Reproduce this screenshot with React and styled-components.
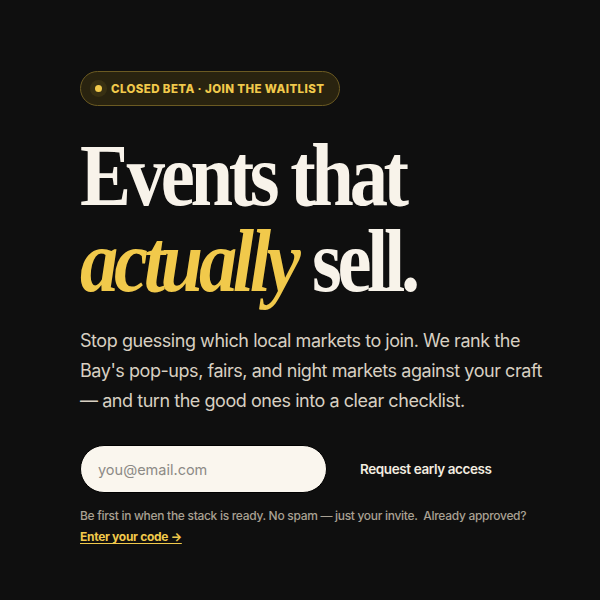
import styled, { createGlobalStyle } from 'styled-components';

const GlobalStyle = createGlobalStyle`
  html, body {
    margin: 0;
    background: #0f0f0f;
  }
  body {
    font-family: Inter, "Noto Sans", sans-serif;
    color: #f6f1e7;
  }
`;

const Screen = styled.main`
  width: 600px;
  height: 600px;
  box-sizing: border-box;
  padding: 71px 40px 0 80px;
  background: #0f0f0f;
`;

const Badge = styled.div`
  display: inline-flex;
  align-items: center;
  gap: 9px;
  height: 35px;
  box-sizing: border-box;
  padding: 0 15px 0 14px;
  border: 1px solid #6b5a22;
  border-radius: 999px;
  background: #29230f;
  color: #f1c94b;
  font-size: 11.5px;
  font-weight: 800;
  letter-spacing: 0.4px;
  text-transform: uppercase;
`;

const Dot = styled.span`
  width: 7px;
  height: 7px;
  border-radius: 50%;
  background: #f1c94b;
  box-shadow: 0 0 0 5px rgba(241, 201, 75, 0.08);
`;

/* the display face is narrower than Times, so squeeze it horizontally */
const Headline = styled.h1`
  margin: 26px 0 0;
  font-family: "Liberation Serif", "DejaVu Serif", serif;
  font-weight: 700;
  font-size: 89px;
  line-height: 86px;
  letter-spacing: -5px;
  color: #f8f3ea;
  transform: scaleX(0.86);
  transform-origin: left center;
  white-space: nowrap;
`;

const Accent = styled.em`
  font-style: italic;
  color: #f1c94b;
  margin-right: 18px;
`;

const Lead = styled.p`
  margin: 22px 0 0;
  max-width: 480px;
  font-size: 18px;
  line-height: 30px;
  letter-spacing: -0.45px;
  color: #d8d0c2;
`;

const Form = styled.form`
  display: flex;
  align-items: center;
  margin-top: 29px;
`;

const EmailInput = styled.input`
  width: 247px;
  height: 48px;
  box-sizing: border-box;
  padding: 0 17px;
  border: 1px solid #000;
  border-radius: 999px;
  background: #faf6ee;
  font-family: Inter, "Noto Sans", sans-serif;
  font-size: 14.5px;
  color: #222;
  outline: none;

  &::placeholder {
    color: #8c8a86;
  }
`;

const SubmitButton = styled.button`
  height: 48px;
  padding: 0 33px;
  border: 0;
  background: transparent;
  font-family: Inter, "Noto Sans", sans-serif;
  font-size: 13.5px;
  font-weight: 600;
  letter-spacing: -0.4px;
  color: #f3ede0;
  cursor: pointer;
`;

const Note = styled.p`
  margin: 12px 0 0;
  font-size: 12px;
  line-height: 21px;
  letter-spacing: -0.3px;
  font-weight: 500;
  color: #a9a193;
`;

const CodeLink = styled.a`
  display: inline-block;
  font-weight: 700;
  color: #f1c94b;
  text-decoration: underline;
  text-underline-offset: 2px;
`;

export default function App() {
  return (
    <>
      <GlobalStyle />
      <Screen>
        <Badge>
          <Dot />
          Closed beta · Join the waitlist
        </Badge>
        <Headline>
          Events that
          <br />
          <Accent>actually</Accent>sell.
        </Headline>
        <Lead>
          Stop guessing which local markets to join. We rank the Bay's pop-ups,
          fairs, and night markets against your craft — and turn the good ones
          into a clear checklist.
        </Lead>
        <Form onSubmit={(e) => e.preventDefault()}>
          <EmailInput type="email" placeholder="you@email.com" />
          <SubmitButton type="submit">Request early access</SubmitButton>
        </Form>
        <Note>
          Be first in when the stack is ready. No spam — just your invite.&nbsp; Already
          approved? <CodeLink href="#">Enter your code →</CodeLink>
        </Note>
      </Screen>
    </>
  );
}
